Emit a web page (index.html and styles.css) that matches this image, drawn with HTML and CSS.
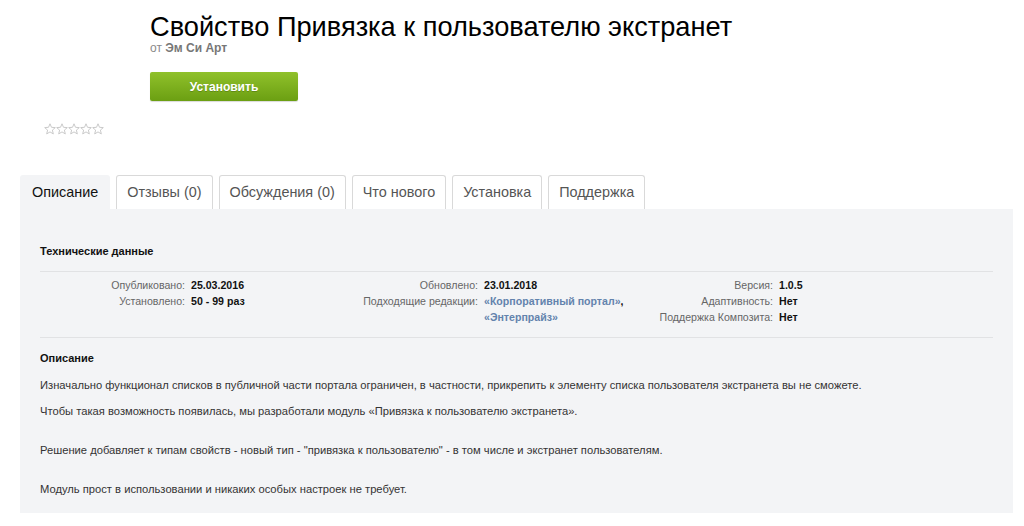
FILE: index.html
```html
<!DOCTYPE html>
<html lang="ru">
<head>
  <meta charset="UTF-8">
  <title>Свойство Привязка к пользователю экстранет</title>
  <link rel="stylesheet" href="styles.css">
</head>
<body>
  <div class="page">
    <div class="header">
      <h1>Свойство Привязка к пользователю экстранет</h1>
      <div class="author">от <b>Эм Си Арт</b></div>
      <button class="btn-install">Установить</button>
    </div>

    <div class="rating">
      <svg width="62" height="12" viewBox="0 0 62 12">
        <g fill="none" stroke="#c4c4c4" stroke-width="0.9">
          <path id="star" d="M6 0.8 L7.5 4.3 L11.3 4.6 L8.4 7.1 L9.3 10.9 L6 8.9 L2.7 10.9 L3.6 7.1 L0.7 4.6 L4.5 4.3 Z"/>
          <use href="#star" x="12"/>
          <use href="#star" x="24"/>
          <use href="#star" x="36"/>
          <use href="#star" x="48"/>
        </g>
      </svg>
    </div>

    <div class="tabs">
      <div class="tab active">Описание</div>
      <div class="tab">Отзывы (0)</div>
      <div class="tab">Обсуждения (0)</div>
      <div class="tab">Что нового</div>
      <div class="tab">Установка</div>
      <div class="tab">Поддержка</div>
    </div>

    <div class="panel">
      <h3>Технические данные</h3>
      <div class="tech">
        <div class="lbl">Опубликовано:</div><div class="val">25.03.2016</div>
        <div class="lbl">Обновлено:</div><div class="val">23.01.2018</div>
        <div class="lbl">Версия:</div><div class="val">1.0.5</div>

        <div class="lbl">Установлено:</div><div class="val">50 - 99 раз</div>
        <div class="lbl">Подходящие редакции:</div>
        <div class="val tall"><a href="#">«Корпоративный портал»</a>,<br><a href="#">«Энтерпрайз»</a></div>
        <div class="lbl">Адаптивность:</div><div class="val">Нет</div>

        <div class="lbl"></div><div class="val"></div>
        <div class="lbl"></div>
        <div class="lbl">Поддержка Композита:</div><div class="val">Нет</div>
      </div>

      <div class="desc">
        <h3>Описание</h3>
        <p>Изначально функционал списков в публичной части портала ограничен, в частности, прикрепить к элементу списка пользователя экстранета вы не сможете.</p>
        <p>Чтобы такая возможность появилась, мы разработали модуль «Привязка к пользователю экстранета».</p>
        <p class="gap">Решение добавляет к типам свойств - новый тип - "привязка к пользователю" - в том числе и экстранет пользователям.</p>
        <p class="gap">Модуль прост в использовании и никаких особых настроек не требует.</p>
      </div>
    </div>
  </div>
</body>
</html>
```

FILE: styles.css
```css
body {
  margin: 0;
  font-family: Arial, "Liberation Sans", sans-serif;
  background: #fff;
  color: #333;
}

.page {
  padding: 0 11px 0 20px;
}

.header {
  margin-left: 130px;
  padding-top: 12px;
}

h1 {
  margin: 0;
  font-size: 27.2px;
  font-weight: normal;
  line-height: 30px;
  color: #000;
}

.author {
  font-size: 12px;
  line-height: 14px;
  color: #8a8a8a;
  margin-top: -1px;
}

.author b {
  color: #777;
}

.btn-install {
  display: block;
  margin-top: 17px;
  width: 148px;
  height: 29px;
  border: 0;
  border-radius: 2px;
  background: linear-gradient(#90c12b, #6b9f12);
  box-shadow: 0 1px 1px rgba(0,0,0,0.15);
  color: #fff;
  font-family: Arial, "Liberation Sans", sans-serif;
  font-size: 12px;
  font-weight: bold;
  text-shadow: 0 1px 0 rgba(0,0,0,0.2);
  cursor: pointer;
}

.rating {
  margin: 22px 0 0 24px;
  height: 12px;
}

.rating svg {
  display: block;
}

.tabs {
  display: flex;
  gap: 6px;
  margin-top: 40px;
  align-items: flex-end;
}

.tab {
  height: 33px;
  line-height: 33px;
  padding: 0 10px;
  font-size: 14.4px;
  color: #555;
  background: #fff;
  border: 1px solid #d9d9d9;
  border-bottom: 0;
  border-radius: 3px 3px 0 0;
}

.tab.active {
  height: 34px;
  line-height: 34px;
  padding: 0 12px;
  background: #f3f4f6;
  border: 0;
  color: #111;
}

.panel {
  background: #f3f4f6;
  padding: 34px 20px 16px 20px;
}

.panel h3 {
  margin: 0;
  font-size: 11px;
  line-height: 16px;
  font-weight: bold;
  color: #111;
}

.panel > h3 {
  padding-bottom: 12px;
  border-bottom: 1px solid #e1e2e4;
}

.tech {
  display: grid;
  grid-template-columns: 151px 169px 124px 166px 129px 1fr;
  grid-auto-rows: 16px;
  padding: 5px 0 12px 0;
  font-size: 10.6px;
  line-height: 16px;
  border-bottom: 1px solid #e1e2e4;
}

.tech .lbl {
  text-align: right;
  padding-right: 6px;
  color: #666;
  white-space: nowrap;
}

.tech .val {
  font-weight: bold;
  color: #111;
  white-space: nowrap;
}

.tech .val.tall {
  grid-row: span 2;
}

.tech .val a {
  color: #6383ad;
  text-decoration: none;
}

.desc {
  padding-top: 12px;
}

.desc p {
  margin: 11px 0 0 0;
  font-size: 11.2px;
  line-height: 16px;
  color: #333;
}

.desc p + p {
  margin-top: 10px;
}

.desc p.gap {
  margin-top: 23px;
}
```
